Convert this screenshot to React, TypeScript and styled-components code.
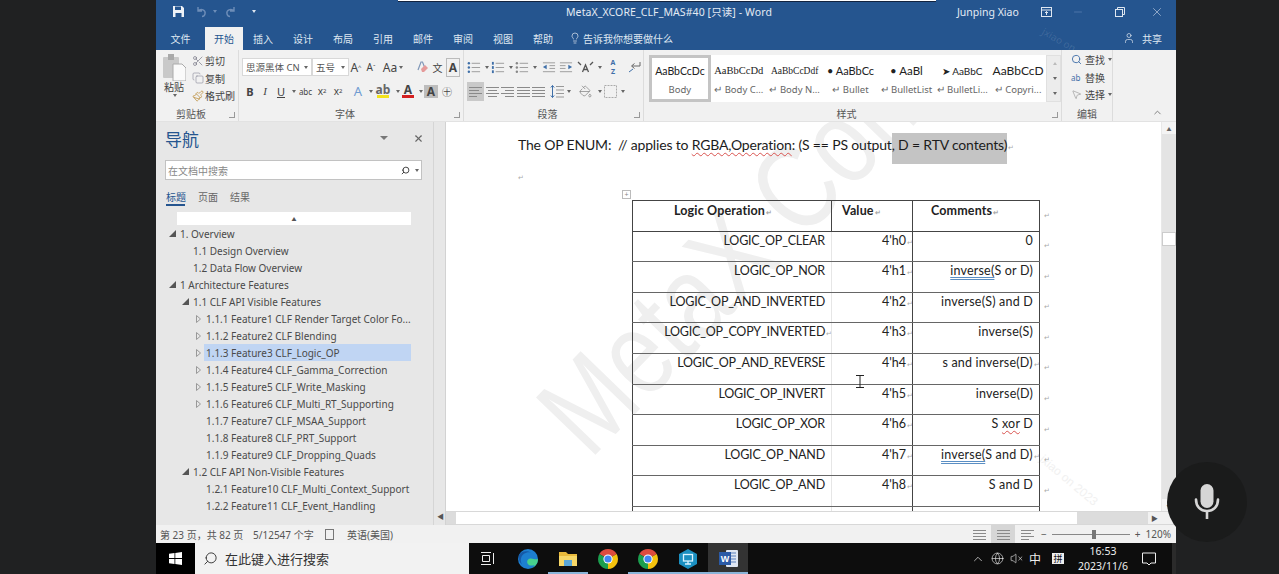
import React from "react";
import styled, { createGlobalStyle } from "styled-components";
import { Search, X, Minus, Scissors, Copy, Paintbrush, PaintBucket, Lightbulb, User, ChevronUp, VolumeX, Globe, MousePointer2 } from "lucide-react";

const UI = `"Noto Sans", "Noto Sans CJK SC", sans-serif`;
const BLUE = "#25558f";

const Global = createGlobalStyle`
  html, body { margin: 0; padding: 0; background: #202122; overflow: hidden; }
  * { box-sizing: border-box; }
`;

const Screen = styled.div`
  position: relative;
  width: 1279px;
  height: 574px;
  overflow: hidden;
  display: flex;
  background: #202122;
  font-family: ${UI};
  color: #444;
`;
const Letterbox = styled.div<{ $w: number }>`
  width: ${(p) => p.$w}px;
  flex: none;
`;
const Word = styled.div`
  width: 1020px;
  flex: none;
  display: flex;
  flex-direction: column;
  background: #f1f1f1;
  position: relative;
`;

/* title bar */
const TitleBar = styled.div`
  height: 25px;
  background: ${BLUE};
  display: flex;
  align-items: center;
  color: #e4ebf4;
  font-size: 10.5px;
  position: relative;
  padding-bottom: 2px;
`;
const Qat = styled.div`
  width: 110px;
  padding-left: 16px;
  display: flex;
  align-items: center;
`;
const Spaced = styled.span<{ $ml: number }>`
  margin-left: ${(p) => p.$ml}px;
  display: flex;
  align-items: center;
`;
const TitleText = styled.div`
  margin-left: 300px;
  width: 199px;
  white-space: nowrap;
  letter-spacing: 0.1px;
`;
const UserName = styled.div`
  margin-left: 192px;
  white-space: nowrap;
`;
const WinButtons = styled.div`
  margin-left: 22px;
  display: flex;
  align-items: center;
`;
const BlackStrip = styled.div`
  position: absolute;
  left: 242px;
  top: 0;
  width: 538px;
  height: 2px;
  background: #fff;
  border-bottom: 1px solid #12233f;
`;

/* tabs */
const TabBar = styled.div`
  height: 25px;
  background: ${BLUE};
  display: flex;
  align-items: flex-end;
  color: #dfe7f1;
  font-size: 10px;
  position: relative;
  overflow: hidden;
`;
const Tab = styled.div<{ $w?: number; $active?: boolean }>`
  width: ${(p) => p.$w ?? 40}px;
  height: 23px;
  display: flex;
  align-items: center;
  justify-content: center;
  padding-bottom: 1px;
  background: ${(p) => (p.$active ? "#f1f1f1" : "transparent")};
  color: ${(p) => (p.$active ? BLUE : "inherit")};
`;
const TellMe = styled.div`
  display: flex;
  align-items: center;
  gap: 2px;
  margin-left: 6px;
  height: 23px;
  width: 554px;
  padding-bottom: 1px;
`;
const Share = styled.div`
  display: flex;
  align-items: center;
  gap: 7px;
  height: 23px;
  padding-bottom: 1px;
`;
const RibbonMark = styled.div`
  position: absolute;
  left: 890px;
  top: 0;
  font-size: 10px;
  line-height: 12px;
  color: rgba(255, 255, 255, 0.12);
  transform: rotate(30deg);
  transform-origin: left top;
  white-space: nowrap;
`;

/* ribbon */
const Ribbon = styled.div`
  height: 72px;
  background: #f1f1f1;
  display: flex;
  position: relative;
  border-bottom: 1px solid #e2e2e2;
  flex: none;
`;
const Group = styled.div<{ $w: number }>`
  width: ${(p) => p.$w}px;
  flex: none;
  display: flex;
  flex-direction: column;
  border-right: 1px solid #dcdcdc;
  position: relative;
`;
const GroupBody = styled.div`
  height: 55px;
  display: flex;
`;
const GroupLabel = styled.div<{ $launcher?: boolean }>`
  height: 16px;
  display: flex;
  align-items: center;
  justify-content: center;
  font-size: 10px;
  color: #555;
  padding-right: ${(p) => (p.$launcher ? 12 : 0)}px;
`;
const Launcher = styled.span`
  position: absolute;
  right: 3px;
  bottom: 3px;
  width: 6px;
  height: 6px;
  border-left: 1px solid #999;
  border-bottom: 1px solid #999;
  transform: scaleX(-1);
`;
const Paste = styled.div`
  width: 36px;
  padding-top: 4px;
  display: flex;
  flex-direction: column;
  align-items: center;
  font-size: 10px;
  line-height: 13px;
`;
const SmallCmds = styled.div`
  padding-top: 2px;
  display: flex;
  flex-direction: column;
`;
const SmallCmd = styled.div`
  height: 17.5px;
  display: flex;
  align-items: center;
  gap: 1px;
  font-size: 10px;
  white-space: nowrap;
`;
const ToolColumn = styled.div`
  display: flex;
  flex-direction: column;
  padding: 6px 0 0 3px;
  gap: 2px;
`;
const ToolRow = styled.div`
  display: flex;
  align-items: center;
  height: 22px;
`;
const Tool = styled.div<{ $w: number; $on?: boolean; $box?: boolean }>`
  width: ${(p) => p.$w}px;
  height: 19px;
  flex: none;
  display: flex;
  align-items: center;
  justify-content: center;
  background: ${(p) => (p.$on ? "#c9c9c9" : "transparent")};
  border: ${(p) => (p.$box ? "1px solid #bbb" : "none")};
  font-size: 12px;
  color: #444;
`;
const SortStack = styled(Tool)`
  flex-direction: column;
  font-size: 7px;
  line-height: 9px;
  color: #3f6fa8;
  font-weight: 700;
`;
const FontBox = styled.div<{ $w: number }>`
  width: ${(p) => p.$w}px;
  height: 18px;
  flex: none;
  background: #fff;
  border: 1px solid #d8d8d8;
  font-size: 9.5px;
  display: flex;
  align-items: center;
  justify-content: space-between;
  padding: 0 3px;
  white-space: nowrap;
  color: #555;
`;
const Caret = styled.span`
  display: inline-block;
  width: 0;
  height: 0;
  border-left: 2px solid transparent;
  border-right: 2px solid transparent;
  border-top: 3px solid #666;
  margin-left: 2px;
`;
const Gallery = styled.div`
  margin: 5px 0 0 5px;
  width: 398px;
  height: 47px;
  background: #fff;
  display: flex;
`;
const StyleCell = styled.div<{ $on?: boolean }>`
  flex: 1 1 0;
  min-width: 0;
  display: flex;
  flex-direction: column;
  align-items: center;
  justify-content: center;
  gap: 5px;
  padding-top: 2px;
  border: ${(p) => (p.$on ? "3px solid #c4c4c4" : "none")};
  overflow: hidden;
`;
const StylePreview = styled.div<{ $serif?: boolean; $size?: number }>`
  font-family: ${(p) => (p.$serif ? `"Liberation Serif", serif` : `"Lato", sans-serif`)};
  font-size: ${(p) => p.$size ?? 11}px;
  color: #222;
  white-space: nowrap;
  line-height: 14px;
`;
const StyleName = styled.div`
  font-size: 9.5px;
  color: #666;
  white-space: nowrap;
  line-height: 13px;
`;
const GalleryScroll = styled.div`
  width: 15px;
  margin-top: 5px;
  height: 47px;
  background: #ececec;
  border: 1px solid #e0e0e0;
  display: flex;
  flex-direction: column;
  align-items: center;
  justify-content: space-around;
`;
const EditCmds = styled.div`
  padding: 1px 0 0 9px;
  display: flex;
  flex-direction: column;
`;

/* main area */
const Main = styled.div`
  flex: 1;
  min-height: 0;
  display: flex;
`;
const Nav = styled.aside`
  width: 290px;
  flex: none;
  background: #e7e7e7;
  border-right: 1px solid #d2d2d2;
  display: flex;
  flex-direction: column;
  position: relative;
  overflow: hidden;
`;
const NavInner = styled.div`
  width: 278px;
  border-right: 1px solid #d5d5d5;
  height: 100%;
  padding: 5px 0 0 9px;
`;
const NavHead = styled.div`
  height: 22px;
  display: flex;
  align-items: center;
  font-size: 17px;
  color: ${BLUE};
`;
const NavMenu = styled.div`
  margin-left: 181px;
  width: 0;
  height: 0;
  border-left: 4px solid transparent;
  border-right: 4px solid transparent;
  border-top: 4px solid #777;
`;
const NavClose = styled.div`
  margin-left: 25px;
  display: flex;
  color: #666;
`;
const NavSearch = styled.div`
  margin-top: 11px;
  width: 257px;
  height: 20px;
  background: #fff;
  border: 1px solid #c2c2c2;
  display: flex;
  align-items: center;
  padding: 0 2px;
  font-size: 10px;
  color: #888;
`;
const NavTabs = styled.div`
  display: flex;
  margin-top: 8px;
  gap: 13px;
  font-size: 10px;
`;
const NavTab = styled.div<{ $on?: boolean }>`
  height: 18px;
  padding-top: 1px;
  width: 19px;
  white-space: nowrap;
  color: ${(p) => (p.$on ? BLUE : "#666")};
  border-bottom: ${(p) => (p.$on ? `2px solid ${BLUE}` : "none")};
  margin-left: ${(p) => (p.$on ? "1px" : "0")};
`;
const Collapsed = styled.div`
  margin: 6px 0 0 12px;
  width: 234px;
  height: 13px;
  background: #fff;
  display: flex;
  align-items: center;
  justify-content: center;
  font-size: 5px;
  color: #555;
`;
const Tree = styled.div`
  margin-left: -9px;
`;
const TreeRow = styled.div<{ $level: number }>`
  height: 17px;
  display: flex;
  align-items: center;
  font-size: 10px;
  color: #4a4a4a;
  white-space: nowrap;
  margin-left: ${(p) => [10, 23, 36][p.$level]}px;
`;
const Twisty = styled.span`
  width: 12px;
  flex: none;
  display: flex;
  justify-content: center;
`;
const TreeLabel = styled.span<{ $on?: boolean }>`
  height: 17px;
  display: flex;
  align-items: center;
  flex: ${(p) => (p.$on ? "0 0 207px" : "none")};
  margin-left: ${(p) => (p.$on ? "0" : "2px")};
  padding-left: ${(p) => (p.$on ? "2px" : "0")};
  background: ${(p) => (p.$on ? "#c0d5f3" : "transparent")};
`;
const NavArrow = styled.div`
  position: absolute;
  right: 1px;
  bottom: 4px;
  font-size: 7px;
  color: #555;
`;

const DocArea = styled.div`
  flex: 1;
  min-width: 0;
  display: flex;
  flex-direction: column;
`;
const DocRow = styled.div`
  flex: 1;
  min-height: 0;
  display: flex;
`;
const Page = styled.div`
  flex: 1;
  min-width: 0;
  background: #fff;
  position: relative;
  overflow: hidden;
  padding: 13px 0 0 72px;
  font-family: "Lato", "Noto Sans", sans-serif;
  color: #1c1c1c;
`;
const Intro = styled.p`
  margin: 0;
  font-size: 14px;
  letter-spacing: -0.17px;
  line-height: 20px;
  white-space: pre;
  position: relative;
`;
const Squiggle = styled.span<{ $c: string; $kind?: string }>`
  text-decoration: underline ${(p) => p.$kind ?? "wavy"} ${(p) => p.$c} 1px;
  text-underline-offset: 2px;
`;
const Shade = styled.span`
  background: #c4c4c4;
  padding: 3px 0 11px;
`;
const Mark = styled.span<{ $hang?: boolean }>`
  color: #aaa;
  font-size: 7px;
  margin-left: 1px;
  margin-right: ${(p) => (p.$hang ? "-7px" : "0")};
  font-family: "Noto Sans", sans-serif;
`;
const EmptyPara = styled.div`
  height: 42px;
  padding-top: 9px;
  line-height: 14px;
`;
const TableWrap = styled.div`
  margin-left: 114px;
  position: relative;
`;
const Handle = styled.div`
  position: absolute;
  left: -10px;
  top: -10px;
  width: 9px;
  height: 9px;
  border: 1px solid #bbb;
  background: #fff;
  font-size: 7px;
  line-height: 7px;
  text-align: center;
  color: #888;
`;
const Table = styled.table`
  border-collapse: collapse;
  table-layout: fixed;
  width: 420px;
  font-size: 12.5px;
  position: relative;
  color: #222;
`;
const Th = styled.th<{ $w: number; $pad: number }>`
  width: ${(p) => p.$w}px;
  height: 30.6px;
  padding: 1px 0 0 ${(p) => p.$pad}px;
  vertical-align: top;
  text-align: left;
  font-weight: 700;
  letter-spacing: 0.15px;
  border: 1px solid #444;
  line-height: 17px;
`;
const Td = styled.td<{ $ls: number; $l?: string; $r?: string }>`
  height: 30.6px;
  padding: 0 6px 0 0;
  vertical-align: top;
  text-align: right;
  white-space: nowrap;
  line-height: 17px;
  letter-spacing: ${(p) => p.$ls}px;
  border-top: 1px solid #666;
  border-bottom: 1px solid #666;
  border-left: 1px solid ${(p) => p.$l ?? "#444"};
  border-right: 1px solid ${(p) => p.$r ?? "#444"};
`;
const EndMark = styled.td`
  width: 13px;
  padding: 10px 0 0 4px;
  vertical-align: top;
  color: #aaa;
  font-size: 7px;
  border: none;
  font-family: "Noto Sans", sans-serif;
`;
const Watermark = styled.div`
  position: absolute;
  left: 157px;
  top: 231px;
  font-size: 120px;
  line-height: 1;
  font-family: "Liberation Sans", sans-serif;
  color: #efefef;
  white-space: nowrap;
  transform: rotate(-46deg) scaleX(0.8);
  transform-origin: left bottom;
  pointer-events: none;
`;
const SmallWatermark = styled.div`
  position: absolute;
  left: 600px;
  top: 330px;
  font-size: 12px;
  font-family: "Liberation Sans", sans-serif;
  color: #f1f1f1;
  white-space: nowrap;
  transform: rotate(40deg);
  transform-origin: left top;
  pointer-events: none;
`;
const IBeam = styled.div`
  position: absolute;
  left: 410px;
  top: 253px;
  display: flex;
`;
const VScroll = styled.div`
  width: 15px;
  flex: none;
  background: #e4e4e4;
  border-left: 1px solid #e8e8e8;
  display: flex;
  flex-direction: column;
`;
const VButton = styled.div`
  height: 12px;
  background: #f4f4f4;
  display: flex;
  align-items: center;
  justify-content: center;
  font-size: 5px;
  color: #666;
`;
const VThumb = styled.div`
  width: 14px;
  height: 14px;
  margin-top: 98px;
  background: #fff;
  border: 1px solid #ccc;
`;
const VSpacer = styled.div`
  flex: 1;
`;
const HScroll = styled.div`
  height: 14px;
  flex: none;
  display: flex;
  align-items: center;
  background: #f1f1f1;
  border-top: 1px solid #d8d8d8;
  border-bottom: 1px solid #d8d8d8;
  font-size: 7px;
  color: #555;
`;
const HArrow = styled.div`
  width: 13px;
  display: flex;
  justify-content: center;
  flex: none;
`;
const HThumb = styled.div`
  width: 621px;
  height: 12px;
  background: #fff;
`;
const HTrack = styled.div<{ $w: number }>`
  width: ${(p) => p.$w}px;
  height: 12px;
  background: #dcdcdc;
`;

/* status bar */
const StatusBar = styled.div`
  height: 18px;
  flex: none;
  background: #f1f1f1;
  display: flex;
  align-items: center;
  font-size: 10px;
  color: #555;
  padding-left: 4px;
  white-space: nowrap;
`;
const StatusItem = styled.span<{ $w: number }>`
  width: ${(p) => p.$w}px;
  flex: none;
  display: flex;
  align-items: center;
`;
const ViewBtn = styled.div<{ $on?: boolean }>`
  width: 24px;
  height: 18px;
  flex: none;
  display: flex;
  align-items: center;
  justify-content: center;
  background: ${(p) => (p.$on ? "#d6d6d6" : "transparent")};
`;
const Slider = styled.div`
  width: 78px;
  height: 1px;
  background: #888;
  margin: 0 5px;
  position: relative;
`;
const SliderKnob = styled.div`
  position: absolute;
  left: 40px;
  top: -4px;
  width: 4px;
  height: 9px;
  background: #777;
`;

/* taskbar */
const Taskbar = styled.div`
  height: 31px;
  flex: none;
  background: #0d0d0d;
  display: flex;
  align-items: center;
  color: #eee;
  border-right: 4px solid #2b2b2b;
`;
const StartBtn = styled.div`
  width: 39px;
  height: 31px;
  background: #000;
  display: flex;
  align-items: center;
  justify-content: center;
  flex: none;
`;
const SearchBox = styled.div`
  width: 274px;
  height: 31px;
  background: #f2f2f2;
  color: #333;
  font-size: 13px;
  display: flex;
  align-items: center;
  gap: 7px;
  padding-left: 8px;
  flex: none;
`;
const TaskIcons = styled.div`
  display: flex;
  margin-left: -1px;
`;
const TaskIcon = styled.div<{ $active?: boolean; $open?: boolean }>`
  width: 40px;
  height: 31px;
  display: flex;
  align-items: center;
  justify-content: center;
  background: ${(p) => (p.$active ? "#333" : "transparent")};
  border-bottom: 2px solid ${(p) => (p.$open ? "#8ab4d8" : "transparent")};
  padding-top: 2px;
`;
const Tray = styled.div`
  margin-left: 223px;
  display: flex;
  align-items: center;
  gap: 6px;
  font-size: 12px;
`;
const Pinyin = styled.span`
  background: #eee;
  color: #111;
  width: 12px;
  height: 11px;
  font-size: 9px;
  line-height: 11px;
  text-align: center;
  margin-left: 5px;
`;
const Clock = styled.div`
  width: 66px;
  margin-left: 6px;
  text-align: center;
  font-size: 10.5px;
  line-height: 15px;
  white-space: nowrap;
`;
const Notify = styled.div`
  margin-left: 6px;
  display: flex;
`;
const MicBubble = styled.div`
  position: absolute;
  left: 1167px;
  top: 462px;
  width: 80px;
  height: 80px;
  border-radius: 50%;
  background: #1a1b1b;
  display: flex;
  align-items: center;
  justify-content: center;
`;
const ColorGlyph = styled.span<{ $fill?: string }>`
  display: inline-flex;
  flex-direction: column;
  align-items: center;
  line-height: 11px;
  font-weight: 700;
  font-size: 12px;
  color: ${(p) => p.$fill ?? "#444"};
`;
const ColorBar = styled.span<{ $c: string }>`
  width: 12px;
  height: 3px;
  background: ${(p) => p.$c};
`;

const SaveIcon = () => (
  <svg width="13" height="13" viewBox="0 0 13 13" fill="#eef2f7">
    <path d="M1 1h9l2 2v9H1z" />
    <rect x="3" y="1.5" width="6" height="3.5" fill="#25558f" />
    <rect x="3.5" y="8" width="6" height="4" fill="#25558f" />
  </svg>
);
const ArrowBack = ({ flip }: { flip?: boolean }) => (
  <svg width="13" height="13" viewBox="0 0 13 13" fill="none" stroke="#6d8db8" strokeWidth="1.4" style={flip ? { transform: "scaleX(-1)" } : undefined}>
    <path d="M3 2v4h4M3 6c3-3 8-1 7 3-.4 1.500-2 2.500-3 2.500" />
  </svg>
);
const RestoreIcon = () => (
  <svg width="10" height="10" viewBox="0 0 10 10" fill="none" stroke="#dfe7f1">
    <rect x="0.5" y="2.5" width="7" height="7" />
    <path d="M2.5 2.500v-2h7v7h-2" />
  </svg>
);
const DisplayIcon = () => (
  <svg width="11" height="10" viewBox="0 0 11 10" fill="none" stroke="#dfe7f1">
    <rect x="0.5" y="0.5" width="10" height="9" />
    <path d="M0.5 3h10M5.500 8V4.500M4 6l1.500-1.500L7 6" />
  </svg>
);
const PasteIcon = () => (
  <svg width="23" height="27" viewBox="0 0 23 27">
    <rect x="0" y="3" width="16" height="21" rx="1" fill="#c9c9c9" />
    <rect x="5" y="0" width="6" height="6" fill="#a9a9a9" />
    <path d="M10 10h9l4 4v13H10z" fill="#fafafa" stroke="#aaa" />
  </svg>
);
const Lines = ({ kind }: { kind: "l" | "c" | "r" | "j" }) => {
  const rows = [
    [1, 14],
    [kind === "c" ? 3 : kind === "r" ? 5 : 1, kind === "c" ? 12 : kind === "r" ? 14 : kind === "l" ? 11 : 14],
    [1, 14],
    [kind === "c" ? 3 : kind === "r" ? 5 : 1, kind === "c" ? 12 : kind === "r" ? 14 : kind === "l" ? 9 : 14],
  ];
  return (
    <svg width="15" height="13" viewBox="0 0 15 13" stroke="#8a8a8a">
      {rows.map((r, i) => (
        <path key={i} d={`M${r[0]} ${2.5 + i * 3}H${r[1]}`} />
      ))}
    </svg>
  );
};
const ListIcon = ({ color = "#3f6fa8", num }: { color?: string; num?: boolean }) => (
  <svg width="14" height="13" viewBox="0 0 15 13">
    {[2, 6.5, 11].map((y) => (
      <React.Fragment key={y}>
        {num ? <rect x="1" y={y - 1.5} width="2" height="3" fill={color} /> : <circle cx="2" cy={y} r="1.3" fill={color} />}
        <path d={`M5 ${y}H14`} stroke="#999" />
      </React.Fragment>
    ))}
  </svg>
);
const IndentIcon = ({ flip }: { flip?: boolean }) => (
  <svg width="14" height="13" viewBox="0 0 15 13" style={flip ? { transform: "scaleX(-1)" } : undefined}>
    <path d="M1 1.500h13M8 4.500h6M8 7.500h6M1 11h13" stroke="#999" />
    <path d="M1 6l4-2.500v5z" fill="#3f6fa8" />
  </svg>
);
const SpacingIcon = () => (
  <svg width="15" height="15" viewBox="0 0 15 15">
    <path d="M6 2.500h8M6 6h8M6 9.500h8M6 13h8" stroke="#999" />
    <path d="M2.500 1.500v12M.8 3.500l1.700-2 1.700 2M.8 11.500l1.700 2 1.700-2" fill="none" stroke="#3f6fa8" />
  </svg>
);
const DirectionIcon = () => (
  <svg width="17" height="13" viewBox="0 0 17 13" fill="none" stroke="#555" strokeWidth="1.300">
    <path d="M1 1l3 3M16 1l-3 3M5.500 11l3-7 3 7M6.800 8.500h3.400" />
  </svg>
);
const PilcrowIcon = () => (
  <svg width="13" height="12" viewBox="0 0 13 12" fill="none" stroke="#666">
    <path d="M12 1v4H4M6.500 2.500L3.500 5l3 2.500" />
    <path d="M1 11l4-3" stroke="#3f6fa8" />
  </svg>
);
const ClearIcon = () => (
  <svg width="14" height="14" viewBox="0 0 14 14">
    <path d="M3 10l3-8h1.500l2 5" fill="none" stroke="#7f97b8" strokeWidth="1.200" />
    <path d="M6 9l4-4 3 3-4 4H7z" fill="#e59a9a" />
  </svg>
);
const ChromeIcon = () => (
  <svg width="20" height="20" viewBox="0 0 20 20">
    <path d="M10 10L1.340 5A10 10 0 0 1 18.660 5z" fill="#dd4b3e" />
    <path d="M10 10L18.660 5A10 10 0 0 1 10 20z" fill="#f4c20d" />
    <path d="M10 10L10 20A10 10 0 0 1 1.340 5z" fill="#1b9e4f" />
    <circle cx="10" cy="10" r="4.600" fill="#fff" />
    <circle cx="10" cy="10" r="3.600" fill="#4285f4" />
  </svg>
);
const EdgeIcon = () => (
  <svg width="20" height="20" viewBox="0 0 20 20">
    <circle cx="10" cy="10" r="10" fill="#1d7fd0" />
    <path d="M20 10c0 5.500-4.500 10-10 10 3 0 6-1.500 6.500-4-2 1-5.500 1-7-1.500-1-2 0-4.500 2.500-5 3-.5 5 1.500 8 .5z" fill="#47d18c" />
    <path d="M1 6c2-4 8-5 12-2.500-4-1-9 1-10 6-.5 2 0 4 1 6C1 13 0 9 1 6z" fill="#1559a8" />
  </svg>
);
const FolderIcon = () => (
  <svg width="18" height="15" viewBox="0 0 18 15">
    <path d="M0 1h7l2 2h9v12H0z" fill="#e8b93c" />
    <rect x="0" y="5" width="18" height="10" fill="#f6d768" />
    <rect x="5" y="9" width="8" height="6" fill="#5aa5d6" />
  </svg>
);
const HexIcon = () => (
  <svg width="18" height="20" viewBox="0 0 18 20">
    <path d="M9 0l9 5v10l-9 5-9-5V5z" fill="#1b8fc0" />
    <rect x="4.500" y="5.500" width="9" height="6.500" fill="none" stroke="#d9f3ff" strokeWidth="1.300" />
    <path d="M9 12v3M6 15h6" stroke="#d9f3ff" strokeWidth="1.300" />
  </svg>
);
const WordIcon = () => (
  <svg width="19" height="17" viewBox="0 0 19 17">
    <rect x="7" y="0" width="12" height="17" rx="1" fill="#dfe6f2" />
    <path d="M10 3h7M10 6h7M10 9h7M10 12h7" stroke="#5a80bd" />
    <rect x="0" y="2" width="12" height="13" fill="#2b5aa6" />
    <text x="6" y="12" textAnchor="middle" fontSize="9" fontWeight="700" fill="#fff" fontFamily="Liberation Sans">W</text>
  </svg>
);
const WinLogo = () => (
  <svg width="13" height="13" viewBox="0 0 13 13" fill="#fff">
    <path d="M0 1.800L5.500 1v5H0zM6.300.9L13 0v6H6.300zM0 7h5.500v5L0 11.200zM6.300 7H13v6l-6.700-.9z" />
  </svg>
);
const MicGlyph = () => (
  <svg width="26" height="36" viewBox="0 0 26 36">
    <rect x="6.500" y="0" width="13" height="24" rx="6.500" fill="#d6d6d6" />
    <path d="M2 15.500c0 7 4.500 11.500 11 11.500s11-4.500 11-11.500" fill="none" stroke="#d6d6d6" strokeWidth="2.600" strokeLinecap="round" />
    <path d="M13 27v8" stroke="#d6d6d6" strokeWidth="2.600" />
  </svg>
);
const TwistyIcon = ({ open }: { open: boolean }) =>
  open ? (
    <svg width="7" height="7" viewBox="0 0 7 7"><path d="M0 7L7 0v7z" fill="#555" /></svg>
  ) : (
    <svg width="5" height="8" viewBox="0 0 5 8"><path d="M.5.500L4.500 4 .5 7.500z" fill="none" stroke="#999" /></svg>
  );

const tree: { t: string; l: number; tw?: "open" | "closed"; on?: boolean }[] = [
  { t: "1. Overview", l: 0, tw: "open" },
  { t: "1.1 Design Overview", l: 1 },
  { t: "1.2 Data Flow Overview", l: 1 },
  { t: "1 Architecture Features", l: 0, tw: "open" },
  { t: "1.1 CLF API Visible Features", l: 1, tw: "open" },
  { t: "1.1.1 Feature1 CLF Render Target Color Fo...", l: 2, tw: "closed" },
  { t: "1.1.2 Feature2 CLF Blending", l: 2, tw: "closed" },
  { t: "1.1.3 Feature3 CLF_Logic_OP", l: 2, tw: "closed", on: true },
  { t: "1.1.4 Feature4 CLF_Gamma_Correction", l: 2, tw: "closed" },
  { t: "1.1.5 Feature5 CLF_Write_Masking", l: 2, tw: "closed" },
  { t: "1.1.6 Feature6 CLF_Multi_RT_Supporting", l: 2, tw: "closed" },
  { t: "1.1.7 Feature7 CLF_MSAA_Support", l: 2 },
  { t: "1.1.8 Feature8 CLF_PRT_Support", l: 2 },
  { t: "1.1.9 Feature9 CLF_Dropping_Quads", l: 2 },
  { t: "1.2 CLF API Non-Visible Features", l: 1, tw: "open" },
  { t: "1.2.1 Feature10 CLF_Multi_Context_Support", l: 2 },
  { t: "1.2.2 Feature11 CLF_Event_Handling", l: 2 },
];

const rows: { op: string; val: string; c: React.ReactNode; mark?: boolean; cm?: boolean }[] = [
  { op: "LOGIC_OP_CLEAR", val: "4'h0", c: "0" },
  { op: "LOGIC_OP_NOR", val: "4'h1", c: <><Squiggle $c="#5b8fc4" $kind="double">inverse(</Squiggle>S or D)</> },
  { op: "LOGIC_OP_AND_INVERTED", val: "4'h2", c: "inverse(S) and D" },
  { op: "LOGIC_OP_COPY_INVERTED", val: "4'h3", c: "inverse(S)", mark: true },
  { op: "LOGIC_OP_AND_REVERSE", val: "4'h4", c: "s and inverse(D)", cm: true },
  { op: "LOGIC_OP_INVERT", val: "4'h5", c: "inverse(D)" },
  { op: "LOGIC_OP_XOR", val: "4'h6", c: <>S <Squiggle $c="#d9534f">xor</Squiggle> D</> },
  { op: "LOGIC_OP_NAND", val: "4'h7", c: <><Squiggle $c="#5b8fc4" $kind="double">inverse(</Squiggle>S and D)</>, cm: true },
  { op: "LOGIC_OP_AND", val: "4'h8", c: "S and D" },
  { op: "", val: "", c: "" },
];

const styleCells = [
  { p: "AaBbCcDc", n: "Body", on: true, size: 10.5 },
  { p: "AaBbCcDd", n: "↵ Body C...", serif: true, size: 10.5 },
  { p: "AaBbCcDdf", n: "↵ Body N...", serif: true, size: 9.5 },
  { p: "• AaBbCc", n: "↵ Bullet", size: 11 },
  { p: "•    AaBl", n: "↵ BulletList", size: 11.5 },
  { p: "➤  AaBbC", n: "↵ BulletLi...", size: 10 },
  { p: "AaBbCcD", n: "↵ Copyri...", size: 12 },
];

export default function App() {
  return (
    <Screen>
      <Global />
      <Letterbox $w={156} />
      <Word>
        <TitleBar>
          <BlackStrip />
          <Qat>
            <SaveIcon />
            <Spaced $ml={10}><ArrowBack /></Spaced>
            <Spaced $ml={3}><Caret style={{ borderTopColor: "#6d8db8" }} /></Spaced>
            <Spaced $ml={7}><ArrowBack flip /></Spaced>
            <Spaced $ml={13}><Caret style={{ borderTopColor: "#dfe7f1" }} /></Spaced>
          </Qat>
          <TitleText>MetaX_XCORE_CLF_MAS#40 [只读] - Word</TitleText>
          <UserName>Junping Xiao</UserName>
          <WinButtons>
            <DisplayIcon />
            <Spaced $ml={20}><Minus size={12} color="#4d74a8" /></Spaced>
            <Spaced $ml={31}><RestoreIcon /></Spaced>
            <Spaced $ml={25}><X size={14} color="#b9c9de" strokeWidth={1.2} /></Spaced>
          </WinButtons>
        </TitleBar>
        <TabBar>
          <RibbonMark>jxiao on</RibbonMark>
          <Tab $w={49}>文件</Tab>
          <Tab $w={38} $active>开始</Tab>
          <Tab>插入</Tab>
          <Tab>设计</Tab>
          <Tab>布局</Tab>
          <Tab>引用</Tab>
          <Tab>邮件</Tab>
          <Tab>审阅</Tab>
          <Tab>视图</Tab>
          <Tab>帮助</Tab>
          <TellMe><Lightbulb size={12} strokeWidth={1.4} />告诉我你想要做什么</TellMe>
          <Share><User size={12} strokeWidth={1.4} />共享</Share>
        </TabBar>
        <Ribbon>
          <Group $w={83}>
            <GroupBody>
              <Paste>
                <PasteIcon />
                粘贴
                <Caret />
              </Paste>
              <SmallCmds>
                <SmallCmd><Scissors size={12} strokeWidth={1.2} color="#667" />剪切</SmallCmd>
                <SmallCmd><Copy size={12} strokeWidth={1.2} color="#889" />复制</SmallCmd>
                <SmallCmd><Paintbrush size={12} strokeWidth={1.4} color="#b8862f" />格式刷</SmallCmd>
              </SmallCmds>
            </GroupBody>
            <GroupLabel $launcher>剪贴板</GroupLabel>
            <Launcher />
          </Group>
          <Group $w={225}>
            <GroupBody>
              <ToolColumn>
                <ToolRow>
                  <FontBox $w={70}>思源黑体 CN<Caret /></FontBox>
                  <FontBox $w={37}>五号<Caret /></FontBox>
                  <Tool $w={14}>A<sup style={{ fontSize: 6 }}>^</sup></Tool>
                  <Tool $w={16} style={{ fontSize: 10 }}>A<sup style={{ fontSize: 6 }}>ˇ</sup></Tool>
                  <Tool $w={28}>Aa<Caret /></Tool>
                  <Tool $w={7} />
                  <Tool $w={16}><ClearIcon /></Tool>
                  <Tool $w={15} style={{ fontSize: 10 }}>文</Tool>
                  <Tool $w={1} />
                  <Tool $w={14} $box style={{ fontWeight: 700 }}>A</Tool>
                </ToolRow>
                <ToolRow>
                  <Tool $w={1} />
                  <Tool $w={14} style={{ fontWeight: 700, fontSize: 11 }}>B</Tool>
                  <Tool $w={16} style={{ fontStyle: "italic", fontSize: 11, fontFamily: "Liberation Serif" }}>I</Tool>
                  <Tool $w={16} style={{ textDecoration: "underline", fontSize: 11 }}>U</Tool>
                  <Tool $w={8}><Caret /></Tool>
                  <Tool $w={17} style={{ fontSize: 8 }}>abc</Tool>
                  <Tool $w={16} style={{ fontSize: 10 }}>x<sub style={{ fontSize: 6 }}>2</sub></Tool>
                  <Tool $w={16} style={{ fontSize: 10 }}>x<sup style={{ fontSize: 6 }}>2</sup></Tool>
                  <Tool $w={2} />
                  <Tool $w={20} style={{ color: "#6f9bd1", fontSize: 13 }}>A</Tool>
                  <Tool $w={4}><Caret /></Tool>
                  <Tool $w={22}><ColorGlyph $fill="#666">ab<ColorBar $c="#f2e21b" /></ColorGlyph></Tool>
                  <Tool $w={6}><Caret /></Tool>
                  <Tool $w={16}><ColorGlyph>A<ColorBar $c="#d42020" /></ColorGlyph></Tool>
                  <Tool $w={7}><Caret /></Tool>
                  <Tool $w={1} />
                  <Tool $w={14} style={{ background: "#bdbdbd", height: 13, fontWeight: 700 }}>A</Tool>
                  <Tool $w={1} />
                  <Tool $w={16} style={{ fontSize: 10 }}>㊉</Tool>
                </ToolRow>
              </ToolColumn>
            </GroupBody>
            <GroupLabel $launcher>字体</GroupLabel>
            <Launcher />
          </Group>
          <Group $w={180}>
            <GroupBody>
              <ToolColumn>
                <ToolRow>
                  <Tool $w={14}><ListIcon /></Tool>
                  <Tool $w={9}><Caret /></Tool>
                  <Tool $w={16}><ListIcon num /></Tool>
                  <Tool $w={8}><Caret /></Tool>
                  <Tool $w={16}><ListIcon color="#888" /></Tool>
                  <Tool $w={8}><Caret /></Tool>
                  <Tool $w={3} />
                  <Tool $w={16}><IndentIcon /></Tool>
                  <Tool $w={17}><IndentIcon flip /></Tool>
                  <Tool $w={22}><DirectionIcon /></Tool>
                  <Tool $w={6}><Caret /></Tool>
                  <SortStack $w={22}><span>A</span><span>Z</span></SortStack>
                  <Tool $w={20}><PilcrowIcon /></Tool>
                </ToolRow>
                <ToolRow>
                  <Tool $w={17} $on><Lines kind="l" /></Tool>
                  <Tool $w={16}><Lines kind="c" /></Tool>
                  <Tool $w={15}><Lines kind="r" /></Tool>
                  <Tool $w={16}><Lines kind="j" /></Tool>
                  <Tool $w={15}><Lines kind="j" /></Tool>
                  <Tool $w={3} />
                  <Tool $w={16}><SpacingIcon /></Tool>
                  <Tool $w={6}><Caret /></Tool>
                  <Tool $w={3} />
                  <Tool $w={22}><PaintBucket size={13} strokeWidth={1.2} color="#777" /></Tool>
                  <Tool $w={5}><Caret /></Tool>
                  <Tool $w={18}><svg width="13" height="13" fill="none" stroke="#aaa"><rect x="0.500" y="0.500" width="12" height="12" strokeDasharray="2 1" /></svg></Tool>
                  <Tool $w={6}><Caret /></Tool>
                </ToolRow>
              </ToolColumn>
            </GroupBody>
            <GroupLabel $launcher>段落</GroupLabel>
            <Launcher />
          </Group>
          <Group $w={418}>
            <GroupBody>
              <Gallery>
                {styleCells.map((s) => (
                  <StyleCell key={s.n} $on={s.on}>
                    <StylePreview $serif={s.serif} $size={s.size}>{s.p}</StylePreview>
                    <StyleName>{s.n}</StyleName>
                  </StyleCell>
                ))}
              </Gallery>
              <GalleryScroll>
                <Caret style={{ transform: "rotate(180deg)", borderTopColor: "#bbb" }} />
                <Caret />
                <Caret />
              </GalleryScroll>
            </GroupBody>
            <GroupLabel $launcher>样式</GroupLabel>
            <Launcher />
          </Group>
          <Group $w={51}>
            <GroupBody>
              <EditCmds>
                <SmallCmd><Search size={11} color="#3f6fa8" style={{ marginRight: 2 }} />查找<Caret /></SmallCmd>
                <SmallCmd><span style={{ fontSize: 8, color: "#3f6fa8", width: 13 }}>ab</span>替换</SmallCmd>
                <SmallCmd><MousePointer2 size={11} strokeWidth={1.2} color="#888" style={{ marginRight: 2 }} />选择<Caret /></SmallCmd>
              </EditCmds>
            </GroupBody>
            <GroupLabel>编辑</GroupLabel>
          </Group>
          <ChevronUp size={11} color="#777" style={{ alignSelf: "flex-end", margin: "0 0 3px 39px" }} />
        </Ribbon>
        <Main>
          <Nav>
            <NavInner>
              <NavHead>
                导航
                <NavMenu />
                <NavClose><X size={11} strokeWidth={2.4} /></NavClose>
              </NavHead>
              <NavSearch>
                <span style={{ flex: 1 }}>在文档中搜索</span>
                <Search size={9} color="#333" strokeWidth={2.4} style={{ transform: "scaleX(-1)" }} />
                <Caret style={{ marginLeft: 5 }} />
              </NavSearch>
              <NavTabs>
                <NavTab $on>标题</NavTab>
                <NavTab>页面</NavTab>
                <NavTab>结果</NavTab>
              </NavTabs>
              <Collapsed>▲</Collapsed>
              <Tree>
                {tree.map((r) => (
                  <TreeRow key={r.t} $level={r.l}>
                    <Twisty>{r.tw && <TwistyIcon open={r.tw === "open"} />}</Twisty>
                    <TreeLabel $on={r.on}>{r.t}</TreeLabel>
                  </TreeRow>
                ))}
              </Tree>
            </NavInner>
            <NavArrow>◀</NavArrow>
          </Nav>
          <DocArea>
            <DocRow>
              <Page>
                <Watermark>MetaX Confi</Watermark>
                <SmallWatermark>jxiao on 2023</SmallWatermark>
                <Intro>
                  The OP ENUM:  // applies to <Squiggle $c="#d9534f">RGBA,Operation</Squiggle>: (S == PS output<Shade>, D = RTV contents)</Shade><Mark>↵</Mark>
                </Intro>
                <EmptyPara><Mark style={{ marginLeft: 0 }}>↵</Mark></EmptyPara>
                <TableWrap>
                  <Handle>+</Handle>
                  <Table>
                    <thead>
                      <tr>
                        <Th $w={199} $pad={41}>Logic Operation<Mark>↵</Mark></Th>
                        <Th $w={81} $pad={10}>Value<Mark>↵</Mark></Th>
                        <Th $w={127} $pad={18}>Comments<Mark>↵</Mark></Th>
                        <EndMark>↵</EndMark>
                      </tr>
                    </thead>
                    <tbody>
                      {rows.map((r, i) => (
                        <tr key={i}>
                          <Td $ls={-0.2} $r="#e6e6e6">{r.op}{r.mark && <Mark $hang>↵</Mark>}</Td>
                          <Td $ls={0} $l="#e6e6e6">{r.val}{r.val && <Mark $hang>↵</Mark>}</Td>
                          <Td $ls={0.2}>{r.c}{r.cm && <Mark $hang>↵</Mark>}</Td>
                          <EndMark>{r.op && "↵"}</EndMark>
                        </tr>
                      ))}
                    </tbody>
                  </Table>
                </TableWrap>
                <IBeam>
                  <svg width="8" height="13" viewBox="0 0 8 13" fill="none" stroke="#222">
                    <path d="M0 .5h8M0 12.500h8M4 .5v12" />
                  </svg>
                </IBeam>
              </Page>
              <VScroll>
                <VButton>▲</VButton>
                <VThumb />
                <VSpacer />
                <VButton>▼</VButton>
              </VScroll>
            </DocRow>
            <HScroll>
              <HTrack $w={10} />
              <HThumb />
              <HTrack $w={71} />
              <HArrow>▶</HArrow>
            </HScroll>
          </DocArea>
        </Main>
        <StatusBar>
          <StatusItem $w={93}>第 23 页，共 82 页</StatusItem>
          <StatusItem $w={72}>5/12547 个字</StatusItem>
          <StatusItem $w={22}><svg width="12" height="11" fill="none" stroke="#777"><rect x="0.500" y="0.500" width="8" height="10" /></svg></StatusItem>
          <StatusItem $w={620}>英语(美国)</StatusItem>
          <ViewBtn><Lines kind="j" /></ViewBtn>
          <ViewBtn $on><Lines kind="j" /></ViewBtn>
          <ViewBtn><Lines kind="l" /></ViewBtn>
          <span style={{ marginLeft: 2 }}>−</span>
          <Slider><SliderKnob /></Slider>
          <span>+</span>
          <span style={{ marginLeft: 5 }}>120%</span>
        </StatusBar>
        <Taskbar>
          <StartBtn><WinLogo /></StartBtn>
          <SearchBox>
            <Search size={15} strokeWidth={1.5} style={{ transform: "scaleX(-1)" }} />
            在此键入进行搜索
          </SearchBox>
          <TaskIcons>
            <TaskIcon>
              <svg width="14" height="13" viewBox="0 0 14 13" fill="none" stroke="#eee">
                <path d="M0 .5h10M0 12.500h10M1.500 3.500h7v6h-7zM12.500 1v11" />
              </svg>
            </TaskIcon>
            <TaskIcon><EdgeIcon /></TaskIcon>
            <TaskIcon $open><FolderIcon /></TaskIcon>
            <TaskIcon><ChromeIcon /></TaskIcon>
            <TaskIcon $open><ChromeIcon /></TaskIcon>
            <TaskIcon $open><HexIcon /></TaskIcon>
            <TaskIcon $active $open><WordIcon /></TaskIcon>
          </TaskIcons>
          <Tray>
            <ChevronUp size={14} strokeWidth={1.2} />
            <Globe size={13} strokeWidth={1.2} />
            <VolumeX size={13} strokeWidth={1.2} />
            <span>中</span>
            <Pinyin>拼</Pinyin>
          </Tray>
          <Clock>16:53<br />2023/11/6</Clock>
          <Notify>
            <svg width="14" height="14" viewBox="0 0 14 14" fill="none" stroke="#eee">
              <path d="M.5 1h13v10H9l-2 2-2-2H.5z" />
            </svg>
          </Notify>
        </Taskbar>
      </Word>
      <Letterbox $w={103} />
      <MicBubble><MicGlyph /></MicBubble>
    </Screen>
  );
}
